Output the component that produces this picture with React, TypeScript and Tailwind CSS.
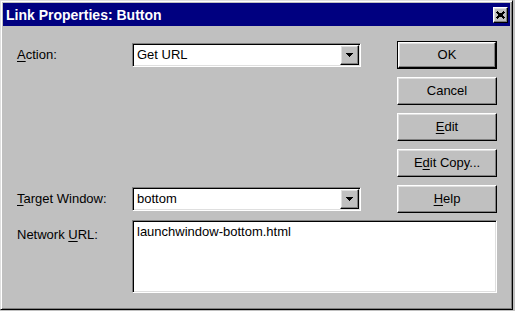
import type { ReactNode } from 'react';

// win95 bevels
const raised =
  'border border-t-white border-l-white border-r-black border-b-black shadow-[inset_-1px_-1px_#808080,inset_1px_1px_#dfdfdf]';
const sunken =
  'border border-t-[#808080] border-l-[#808080] border-r-white border-b-white shadow-[inset_1px_1px_#000,inset_-1px_-1px_#dfdfdf]';

const U = ({ children }: { children: ReactNode }) => (
  <span className="underline underline-offset-2">{children}</span>
);

const Button = ({ children, isDefault, className }: { children: ReactNode; isDefault?: boolean; className?: string }) => (
  <div className={`${className ?? ''} ${isDefault ? 'border border-black' : ''} flex`}>
    <div className={`${raised} flex-1 flex items-center justify-center text-[13px] text-black`}>{children}</div>
  </div>
);

const Dropdown = ({ value, className }: { value: string; className?: string }) => (
  <div className={`${className ?? ''} ${sunken} bg-white h-[24px] p-px flex`}>
    <div className="flex-1 flex items-center pl-[3px] text-[13px] text-black">{value}</div>
    <div className={`${raised} w-[19px] bg-[#c0c0c0] flex items-center justify-center`}>
      <svg width="7" height="4" viewBox="0 0 7 4" shapeRendering="crispEdges">
        <polygon points="0,0 7,0 3.5,4" fill="#000" />
      </svg>
    </div>
  </div>
);

export default function App() {
  return (
    <div className="min-h-screen bg-[#c0c0c0] font-['Liberation_Sans',Arial,sans-serif]">
      <div className="w-[513px] h-[310px] bg-[#c0c0c0] border border-t-[#dfdfdf] border-l-[#dfdfdf] border-r-black border-b-black shadow-[inset_1px_1px_#fff,inset_-1px_-1px_#808080] p-[2px] flex flex-col">
        {/* Title bar */}
        <div className="h-[23px] bg-[#000080] flex items-center justify-between pl-[3px] pr-[2px]">
          <span className="text-white font-bold text-[14px] leading-none">Link Properties: Button</span>
          <div className={`${raised} w-[15px] h-[16px] bg-[#c0c0c0] flex items-center justify-center`}>
            <svg width="9" height="8" viewBox="0 0 9 8" shapeRendering="crispEdges">
              <path d="M0.8 0.5 L8.2 7.5 M8.2 0.5 L0.8 7.5" stroke="#000" strokeWidth="2.2" />
            </svg>
          </div>
        </div>

        {/* Body */}
        <div className="grid grid-cols-[115px_229px_36px_100px] grid-rows-[repeat(5,28px)_72px] gap-y-2 pl-[14px] pt-[15px] text-[13px] leading-4 text-black">
          <div className="col-start-1 row-start-1 self-center">
            <U>A</U>ction:
          </div>
          <Dropdown value="Get URL" className="col-start-2 row-start-1 self-center" />
          <Button isDefault className="col-start-4 row-start-1">OK</Button>
          <Button className="col-start-4 row-start-2">Cancel</Button>
          <Button className="col-start-4 row-start-3">
            <U>E</U>dit
          </Button>
          <Button className="col-start-4 row-start-4">
            E<U>d</U>it Copy...
          </Button>

          <div className="col-start-1 row-start-5 self-center">
            <U>T</U>arget Window:
          </div>
          <Dropdown value="bottom" className="col-start-2 row-start-5 self-center" />
          <Button className="col-start-4 row-start-5">
            <U>H</U>elp
          </Button>

          <div className="col-start-1 row-start-6 self-start pt-[7px] -mt-px">
            Network <U>U</U>RL:
          </div>
          <div className={`col-start-2 col-span-3 row-start-6 -mt-px ${sunken} bg-white pl-[4px] pt-[3px]`}>
            launchwindow-bottom.html
          </div>
        </div>
      </div>
    </div>
  );
}
